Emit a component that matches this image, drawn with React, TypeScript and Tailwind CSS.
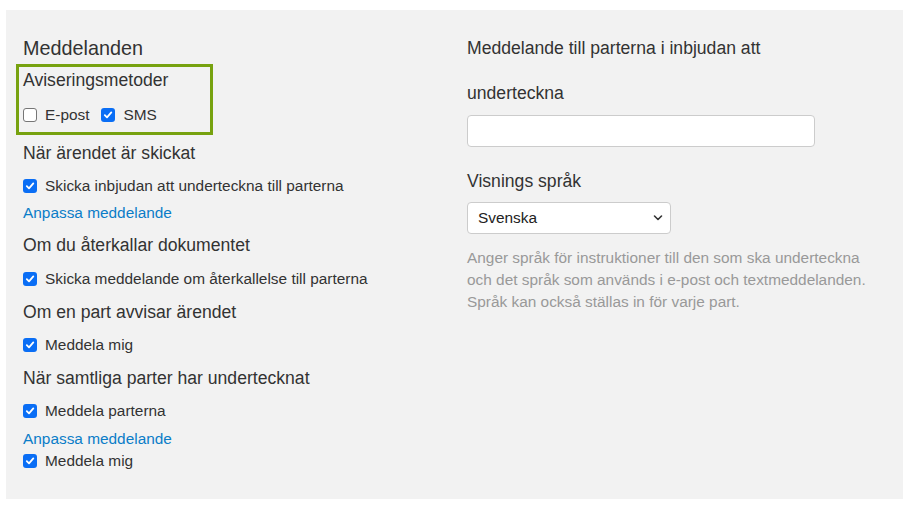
import React from "react";

const FONT = { fontFamily: '"Liberation Sans", Arial, sans-serif' };

const Check: React.FC<{ checked?: boolean; label: string }> = ({ checked = false, label }) => (
  <label className="flex items-center gap-[8px] h-[22px] text-[15.4px] text-[#333]">
    {checked ? (
      <span className="w-[14px] h-[14px] rounded-[3px] bg-[#0a6ef5] flex items-center justify-center shrink-0">
        <svg width="10" height="10" viewBox="0 0 10 10" fill="none">
          <path d="M1.8 5.2 L4 7.4 L8.3 2.4" stroke="#fff" strokeWidth="1.8" strokeLinecap="round" strokeLinejoin="round" />
        </svg>
      </span>
    ) : (
      <span className="w-[14px] h-[14px] rounded-[3px] bg-white border border-[#767676] shrink-0" />
    )}
    <span>{label}</span>
  </label>
);

const Label: React.FC<{ children: React.ReactNode; className?: string }> = ({ children, className = "" }) => (
  <div className={`text-[17.6px] leading-[22px] text-[#333] ${className}`}>{children}</div>
);

const Link: React.FC = () => (
  <a href="#" className="block text-[15.4px] leading-[20px] text-[#0b7dc8]">
    Anpassa meddelande
  </a>
);

export default function App() {
  return (
    <div className="bg-white w-[911px] h-[511px] pt-[10px] pl-[6px]" style={FONT}>
      <div className="w-[897px] h-[489px] bg-[#f2f2f2] pl-[17px] pt-[26px] grid grid-cols-[444px_1fr]">
        <div className="flex flex-col">
          <div className="text-[19.8px] leading-[24px] text-[#333]">Meddelanden</div>
          <div className="mt-[4px] -ml-[7px] w-[197px] border-[3px] border-[#77a20f] pt-[2px] pb-[6px] pl-[4px]">
            <Label>Aviseringsmetoder</Label>
            <div className="mt-[13px] flex gap-[12px]">
              <Check label="E-post" />
              <Check checked label="SMS" />
            </div>
          </div>

          <Label className="mt-[7px]">När ärendet är skickat</Label>
          <div className="mt-[11px]">
            <Check checked label="Skicka inbjudan att underteckna till parterna" />
          </div>
          <div className="mt-[6px]">
            <Link />
          </div>

          <Label className="mt-[11px]">Om du återkallar dokumentet</Label>
          <div className="mt-[12px]">
            <Check checked label="Skicka meddelande om återkallelse till parterna" />
          </div>

          <Label className="mt-[11px]">Om en part avvisar ärendet</Label>
          <div className="mt-[11px]">
            <Check checked label="Meddela mig" />
          </div>

          <Label className="mt-[11px]">När samtliga parter har undertecknat</Label>
          <div className="mt-[11px]">
            <Check checked label="Meddela parterna" />
          </div>
          <div className="mt-[7px]">
            <Link />
          </div>
          <div className="mt-[1px]">
            <Check checked label="Meddela mig" />
          </div>
        </div>

        <div className="flex flex-col -mt-[10px]">
          <div className="text-[17.6px] leading-[45px] text-[#333] w-[380px]">
            Meddelande till parterna i inbjudan att underteckna
          </div>
          <input
            type="text"
            className="-mt-[1px] w-[348px] h-[32px] bg-white border border-[#cccccc] rounded-[4px] px-[10px] text-[15.4px] outline-none"
          />
          <Label className="mt-[23px]">Visnings språk</Label>
          <div className="mt-[10px] relative w-[204px] h-[32px]">
            <select
              defaultValue="sv"
              className="appearance-none w-full h-full bg-white border border-[#cccccc] rounded-[4px] pl-[10px] text-[15.4px] text-[#222] outline-none"
              style={FONT}
            >
              <option value="sv">Svenska</option>
              <option value="en">English</option>
            </select>
            <svg
              className="absolute right-[8px] top-[12px] pointer-events-none"
              width="10"
              height="8"
              viewBox="0 0 10 8"
              fill="none"
            >
              <path d="M1.5 2 L5 5.5 L8.5 2" stroke="#333" strokeWidth="1.6" strokeLinecap="round" strokeLinejoin="round" />
            </svg>
          </div>
          <p className="mt-[13px] w-[415px] text-[15.4px] leading-[22px] text-[#999]">
            Anger språk för instruktioner till den som ska underteckna och det språk som används i e-post och
            textmeddelanden. Språk kan också ställas in för varje part.
          </p>
        </div>
      </div>
    </div>
  );
}
